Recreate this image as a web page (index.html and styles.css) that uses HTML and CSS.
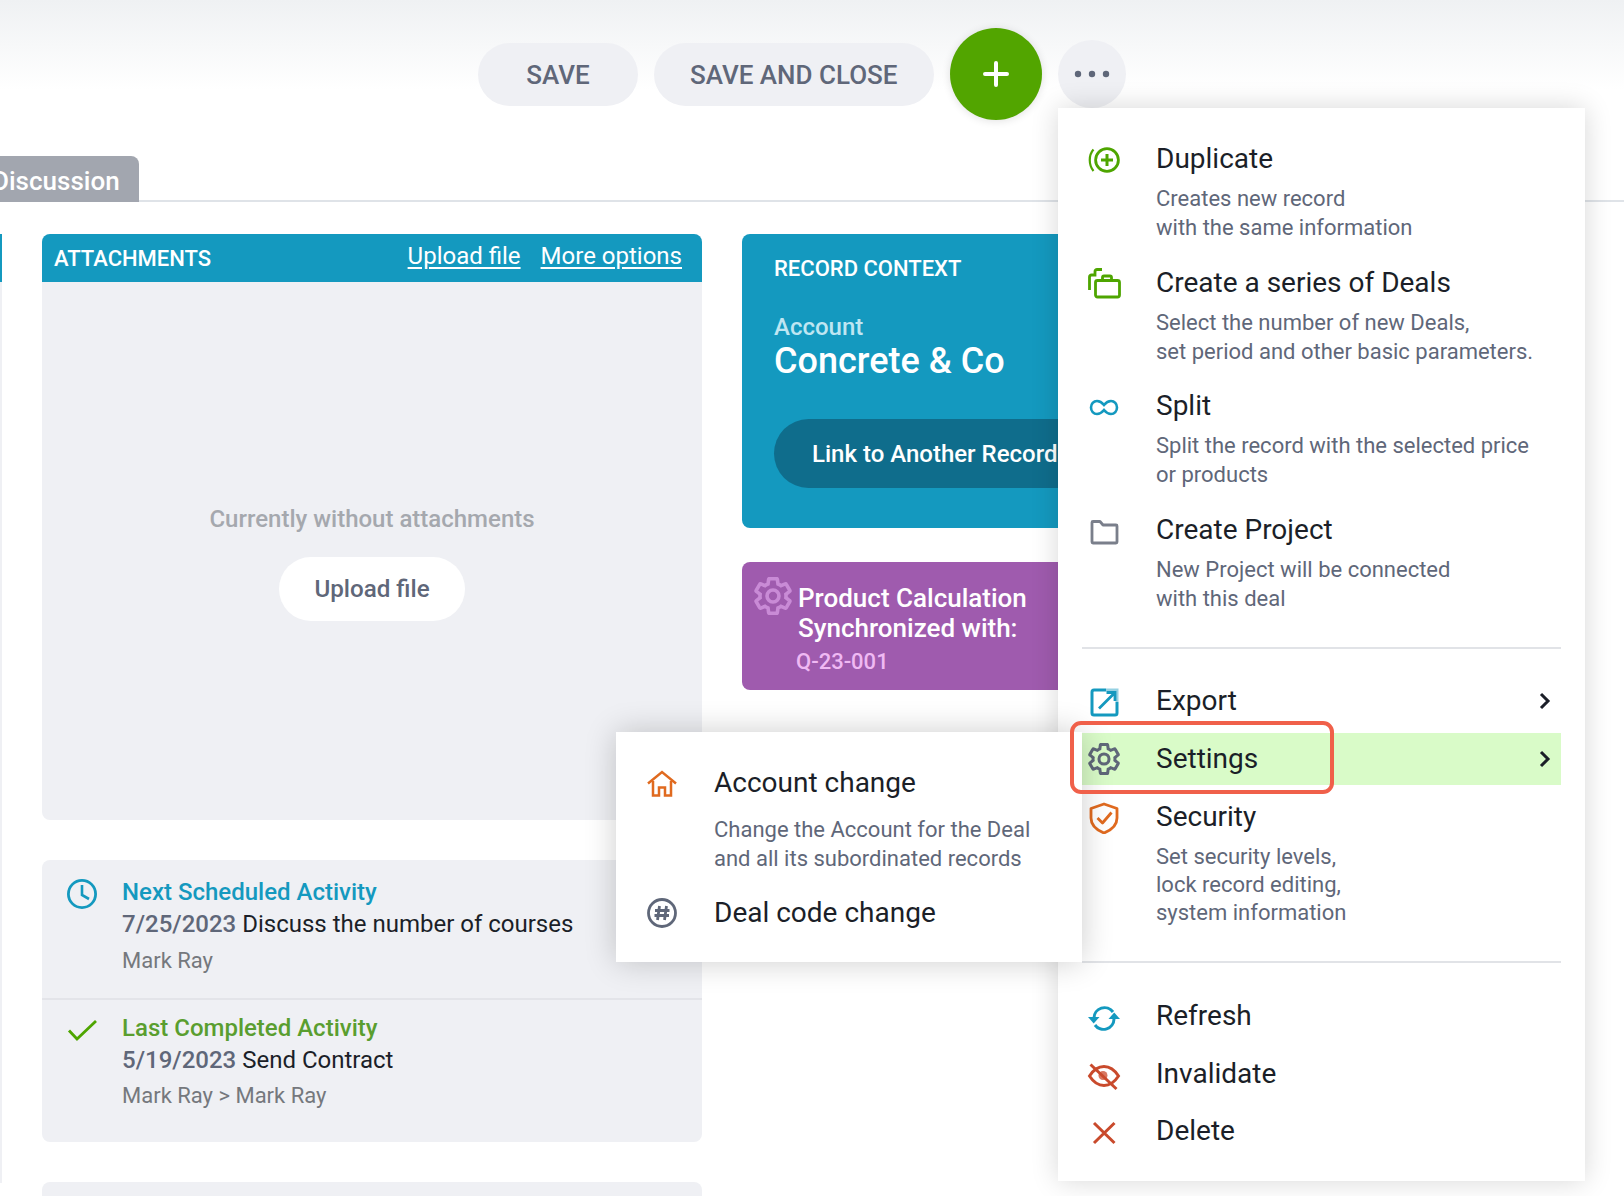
FILE: index.html
```html
<!DOCTYPE html>
<html lang="en">
<head>
<meta charset="utf-8">
<title>Deal</title>
<link rel="stylesheet" href="styles.css">
</head>
<body>
<svg class="defs" width="0" height="0" aria-hidden="true">
  <symbol id="gear" viewBox="1.5 1.5 21 21">
    <path d="M19.14 12.94c.04-.3.06-.61.06-.94 0-.32-.02-.64-.07-.94l2.03-1.58c.18-.14.23-.41.12-.61l-1.92-3.32c-.12-.22-.37-.29-.59-.22l-2.39.96c-.5-.38-1.03-.7-1.62-.94l-.36-2.54c-.04-.24-.24-.41-.48-.41h-3.84c-.24 0-.43.17-.47.41l-.36 2.54c-.59.24-1.13.57-1.62.94l-2.39-.96c-.22-.08-.47 0-.59.22L2.74 8.87c-.12.21-.08.47.12.61l2.03 1.58c-.05.3-.09.63-.09.94s.02.64.07.94l-2.03 1.58c-.18.14-.23.41-.12.61l1.92 3.32c.12.22.37.29.59.22l2.39-.96c.5.38 1.03.7 1.62.94l.36 2.54c.05.24.24.41.48.41h3.84c.24 0 .44-.17.47-.41l.36-2.54c.59-.24 1.13-.56 1.62-.94l2.39.96c.22.08.47 0 .59-.22l1.92-3.32c.12-.22.07-.47-.12-.61l-2.01-1.58z" fill="none" stroke="currentColor" stroke-width="2"/>
    <circle cx="12" cy="12" r="3.3" fill="none" stroke="currentColor" stroke-width="2"/>
  </symbol>
</svg>

<div class="page">
  <header class="topbar">
    <button class="pill pill-save">SAVE</button>
    <button class="pill">SAVE AND CLOSE</button>
    <button class="add" aria-label="Add">
      <svg width="28" height="28" viewBox="0 0 28 28"><path d="M14 3V25M3 14H25" stroke="#fff" stroke-width="4" stroke-linecap="round"/></svg>
    </button>
    <button class="more" aria-label="More">
      <svg width="36" height="8" viewBox="0 0 36 8"><circle cx="4" cy="4" r="3.2"/><circle cx="18" cy="4" r="3.2"/><circle cx="32" cy="4" r="3.2"/></svg>
    </button>
  </header>

  <nav class="tabs"><span class="tab">Discussion</span></nav>

  <main class="content">
    <div class="rail"><div class="rail-head"></div></div>

    <div class="col-main">
      <section class="attachments">
        <div class="att-head">
          <span class="att-title">ATTACHMENTS</span>
          <span class="att-links"><a class="att-link">Upload file</a><a class="att-link">More options</a></span>
        </div>
        <div class="att-body">
          <p class="att-empty">Currently without attachments</p>
          <button class="upload">Upload file</button>
        </div>
      </section>

      <section class="activity">
        <div class="act-row act-next">
          <div class="act-icon">
            <svg width="32" height="32" viewBox="0 0 32 32" fill="none" stroke="#1499bf" stroke-width="2.8"><circle cx="16" cy="16" r="13.6"/><path d="M16 7V17L23 21" stroke-width="2.6"/></svg>
          </div>
          <div>
            <div class="act-title blue">Next Scheduled Activity</div>
            <div class="act-line"><b class="act-date">7/25/2023</b> Discuss the number of courses</div>
            <div class="act-who">Mark Ray</div>
          </div>
        </div>
        <div class="act-row act-last">
          <div class="act-icon">
            <svg width="32" height="32" viewBox="0 0 32 32" fill="none" stroke="#4ea500" stroke-width="2.8"><path d="M3 17.500L11 26L30 8"/></svg>
          </div>
          <div>
            <div class="act-title green">Last Completed Activity</div>
            <div class="act-line"><b class="act-date">5/19/2023</b> Send Contract</div>
            <div class="act-who">Mark Ray &gt; Mark Ray</div>
          </div>
        </div>
      </section>

      <section class="stub"></section>
    </div>

    <div class="col-side">
      <section class="context">
        <h2 class="ctx-title">RECORD CONTEXT</h2>
        <div class="ctx-label">Account</div>
        <div class="ctx-name">Concrete &amp; Co</div>
        <button class="ctx-btn">Link to Another Record</button>
      </section>
      <section class="sync">
        <svg class="sync-icon" width="38" height="38"><use href="#gear"/></svg>
        <div>
          <div class="sync-title">Product Calculation<br>Synchronized with:</div>
          <div class="sync-code">Q-23-001</div>
        </div>
      </section>
    </div>
  </main>

  <aside class="menu">
    <div class="item tall">
      <div class="ico"><svg width="34" height="34" viewBox="0 0 34 34" fill="none" stroke="#4ea500" stroke-width="2.8"><circle cx="20" cy="18" r="11.4"/><path d="M20 12V24M14 18H26" stroke-width="3"/><path d="M6.5 7.5C1.5 13 1.5 23 6.5 29" stroke-width="2.2"/></svg></div>
      <div class="body"><div class="title">Duplicate</div><div class="desc">Creates new record<br>with the same information</div></div>
    </div>
    <div class="item tall tall-short">
      <div class="ico"><svg width="34" height="34" viewBox="0 0 34 34" fill="none" stroke="#4ea500" stroke-width="2.8"><rect x="8.5" y="14.5" width="24" height="16.5" rx="2"/><path d="M15.5 14V11.5A1.5 1.5 0 0 1 17 10H23A1.5 1.5 0 0 1 24.500 11.500V14"/><path d="M2.500 24V11A2 2 0 0 1 4.500 9H8V5.500A2 2 0 0 1 10 3.500H15"/></svg></div>
      <div class="body"><div class="title">Create a series of Deals</div><div class="desc">Select the number of new Deals,<br>set period and other basic parameters.</div></div>
    </div>
    <div class="item tall">
      <div class="ico"><svg width="34" height="34" viewBox="0 0 34 34" fill="none" stroke="#1499bf" stroke-width="2.6"><path d="M17 16C15 13.500 13 12 10 12C6.500 12 4 15 4 18.500C4 22 6.500 25 10 25C13 25 15 23.500 17 21C19 23.500 21 25 24 25C27.500 25 30 22 30 18.500C30 15 27.500 12 24 12C21 12 19 13.500 17 16Z"/></svg></div>
      <div class="body"><div class="title">Split</div><div class="desc">Split the record with the selected price<br>or products</div></div>
    </div>
    <div class="item">
      <div class="ico"><svg width="34" height="34" viewBox="0 0 34 34" fill="none" stroke="#7a7f8b" stroke-width="2.8" stroke-linejoin="round"><path d="M5 9.500A1 1 0 0 1 6 8.500H13L16 12H29A1 1 0 0 1 30 13V29A1 1 0 0 1 29 30H6A1 1 0 0 1 5 29Z"/></svg></div>
      <div class="body"><div class="title">Create Project</div><div class="desc">New Project will be connected<br>with this deal</div></div>
    </div>

    <hr class="sep sep-a">

    <div class="item row">
      <div class="ico"><svg width="34" height="34" viewBox="0 0 34 34" fill="none" stroke="#1499bf" stroke-width="3"><path d="M19 6H7A2 2 0 0 0 5 8V29A2 2 0 0 0 7 31H28A2 2 0 0 0 30 29V18"/><path d="M19 6H30V18" opacity=".45"/><path d="M12 24.500L27 9.500M19.500 8.500H28V17" stroke-width="2.800"/></svg></div>
      <div class="title">Export</div>
      <svg class="chev" width="12" height="18" viewBox="0 0 12 18" fill="none" stroke="#1b1f28" stroke-width="3"><path d="M2 2L9 9L2 16"/></svg>
    </div>
    <div class="item row active">
      <div class="ico"><svg class="gear" width="32" height="32"><use href="#gear"/></svg></div>
      <div class="title">Settings</div>
      <svg class="chev" width="12" height="18" viewBox="0 0 12 18" fill="none" stroke="#1b1f28" stroke-width="3"><path d="M2 2L9 9L2 16"/></svg>
    </div>
    <div class="item security">
      <div class="ico"><svg width="34" height="34" viewBox="0 0 34 34" fill="none" stroke="#e06a1f" stroke-width="2.800" stroke-linejoin="round"><path d="M17 4L30 8.500V18C30 25 24.500 30 17 33C9.500 30 4 25 4 18V8.500Z"/><path d="M10.500 18L15.500 23L24.500 12.500"/></svg></div>
      <div class="body"><div class="title">Security</div><div class="desc">Set security levels,<br>lock record editing,<br>system information</div></div>
    </div>

    <hr class="sep sep-b">

    <div class="item row">
      <div class="ico"><svg width="34" height="34" viewBox="0 0 34 34" fill="none" stroke="#1499bf" stroke-width="3"><path d="M7 19A10.500 10.500 0 0 1 26 13"/><path d="M27 20A10.500 10.500 0 0 1 8 26"/><path d="M1 18H12.500L6.700 24.500Z" fill="#1499bf" stroke="none"/><path d="M21.500 20H33L27.200 13.500Z" fill="#1499bf" stroke="none"/></svg></div>
      <div class="title">Refresh</div>
    </div>
    <div class="item row row-tight">
      <div class="ico"><svg width="34" height="34" viewBox="0 0 34 34" fill="none" stroke="#c94a2c" stroke-width="3"><path d="M2.500 19C7 12 12 9.500 17 9.500S27 12 31.500 19C27 26 22 28.500 17 28.500S7 26 2.500 19Z"/><circle cx="16" cy="18.500" r="4.500" fill="#c94a2c" opacity=".75" stroke="none"/><path d="M3.500 7.500L29.500 32"/></svg></div>
      <div class="title">Invalidate</div>
    </div>
    <div class="item row">
      <div class="ico"><svg width="34" height="34" viewBox="0 0 34 34" fill="none" stroke="#c94a2c" stroke-width="3"><path d="M7 9L27.500 29M27.500 9L7 29"/></svg></div>
      <div class="title">Delete</div>
    </div>
  </aside>

  <aside class="submenu">
    <div class="item sub-first">
      <div class="ico"><svg width="34" height="34" viewBox="0 0 34 34" fill="none" stroke="#e06a1f" stroke-width="2.500"><path d="M3 17.500L17 6L31 17.500"/><path d="M8 15V29.500H14V21.500H20V29.500H26V15"/></svg></div>
      <div class="body"><div class="title">Account change</div><div class="desc sub-desc">Change the Account for the Deal<br>and all its subordinated records</div></div>
    </div>
    <div class="item">
      <div class="ico"><svg width="34" height="34" viewBox="0 0 34 34" fill="none" stroke="#5f6779" stroke-width="2.800"><circle cx="17" cy="17" r="13.500"/><path d="M14.500 10L12.500 24M21.500 10L19.500 24M10 14.500H24.500M9.500 19.500H24" stroke-width="2.800"/></svg></div>
      <div class="title">Deal code change</div>
    </div>
  </aside>

  <div class="callout"></div>
</div>
</body>
</html>
```

FILE: styles.css
```css
* { box-sizing: border-box; }

html, body {
  margin: 0;
  padding: 0;
  background: #fff;
}

body {
  font-family: Roboto, "Liberation Sans", sans-serif;
  color: #1b1f28;
}

.defs { position: absolute; }

button {
  font-family: inherit;
  border: 0;
  padding: 0;
}

.page {
  position: relative;
  width: 1624px;
  height: 1196px;
  overflow: hidden;
  background: #fff;
}

/* top bar */
.topbar {
  display: flex;
  align-items: center;
  gap: 16px;
  height: 156px;
  padding: 28px 0 36px 478px;
  background: linear-gradient(#eff1f3 0, #fff 90px);
}

.pill {
  height: 63px;
  padding: 2px 36px 0;
  border-radius: 32px;
  background: #eff0f4;
  color: #5f6779;
  font-size: 26px;
  font-weight: 500;
}

.pill-save {
  width: 160px;
  padding: 2px 0 0;
}

.add {
  display: flex;
  align-items: center;
  justify-content: center;
  width: 92px;
  height: 92px;
  border-radius: 50%;
  background: #52a500;
  box-shadow: 0 1px 8px rgba(0, 0, 0, .12);
}

.more {
  display: flex;
  align-items: center;
  justify-content: center;
  width: 68px;
  height: 68px;
  border-radius: 50%;
  background: #eff0f4;
  fill: #5f6779;
}

/* tabs */
.tabs {
  height: 46px;
  border-bottom: 2px solid #dfe3e8;
}

.tab {
  display: inline-block;
  height: 46px;
  margin-left: -8px;
  padding: 0 19px 0 0;
  border-radius: 0 8px 0 0;
  background: #a2a6af;
  color: #fff;
  font-size: 26px;
  font-weight: 500;
  line-height: 50px;
}

/* content */
.content {
  display: grid;
  grid-template-columns: 2px 660px 420px;
  column-gap: 40px;
  padding-top: 32px;
}

.rail {
  height: 949px;
  background: #eff0f4;
}

.rail-head {
  height: 48px;
  background: #1499bf;
}

.col-main {
  display: flex;
  flex-direction: column;
  gap: 40px;
}

.attachments {
  height: 586px;
  border-radius: 8px;
  background: #eff0f4;
  overflow: hidden;
}

.att-head {
  display: flex;
  align-items: center;
  justify-content: space-between;
  height: 48px;
  padding: 0 20px 0 12px;
  background: #1499bf;
  color: #fff;
}

.att-title {
  font-size: 22px;
  font-weight: 500;
}

.att-links {
  display: flex;
  gap: 20px;
  margin-top: -5px;
}

.att-link {
  font-size: 24px;
  text-decoration: underline;
  text-underline-offset: 3px;
}

.att-body {
  display: flex;
  flex-direction: column;
  align-items: center;
  padding-top: 221px;
}

.att-empty {
  margin: 0 0 22px;
  color: #a5a8ae;
  font-size: 24px;
  font-weight: 500;
  line-height: 32px;
}

.upload {
  width: 186px;
  height: 64px;
  border-radius: 32px;
  background: #fff;
  color: #5f6779;
  font-size: 24.200px;
  font-weight: 500;
}

.activity {
  height: 282px;
  border-radius: 8px;
  background: #eff0f4;
  font-size: 24px;
}

.act-row {
  display: flex;
  align-items: flex-start;
}

.act-next {
  height: 140px;
  padding-top: 17px;
  border-bottom: 2px solid #e3e4e9;
}

.act-last { padding-top: 13px; }

.act-icon {
  display: flex;
  justify-content: center;
  width: 80px;
}

.act-next .act-icon { margin-top: 1px; }

.act-title {
  font-weight: 500;
  line-height: 30px;
}

.blue { color: #1499bf; }
.green { color: #5a9e2f; }

.act-line {
  margin-top: 2px;
  line-height: 31px;
}

.act-date {
  color: #5f6779;
  font-weight: 500;
}

.act-who {
  margin-top: 5px;
  color: #75787d;
  font-size: 22px;
  line-height: 31px;
}

.act-last .act-who { margin-top: 4px; }

.stub {
  height: 40px;
  border-radius: 8px;
  background: #eff0f4;
}

.col-side {
  display: flex;
  flex-direction: column;
  gap: 34px;
}

.context {
  height: 294px;
  padding: 20px 32px 0;
  border-radius: 8px;
  background: #1499bf;
  color: #fff;
}

.ctx-title {
  margin: 0;
  font-size: 22px;
  font-weight: 500;
  line-height: 30px;
}

.ctx-label {
  margin-top: 29px;
  color: #bfe6f2;
  font-size: 24px;
  font-weight: 500;
  line-height: 29px;
}

.ctx-name {
  font-size: 36px;
  font-weight: 500;
  line-height: 38px;
}

.ctx-btn {
  display: block;
  width: 340px;
  height: 69px;
  margin-top: 39px;
  padding-left: 38px;
  border-radius: 35px;
  background: #0f6d8c;
  color: #fff;
  font-size: 24px;
  font-weight: 500;
  text-align: left;
}

.sync {
  display: flex;
  height: 128px;
  padding: 13px 0 0 12px;
  border-radius: 8px;
  background: #9f5bae;
  color: #fff;
}

.sync-icon {
  flex: none;
  margin: 2px 6px 0 0;
  color: #c98bd6;
}

.sync-title {
  margin-top: 8px;
  font-size: 26px;
  font-weight: 500;
  line-height: 30px;
}

.sync-code {
  margin: 4px 0 0 -2px;
  color: #efb9f3;
  font-size: 22px;
  font-weight: 500;
  line-height: 30px;
}

/* menus */
.menu {
  position: absolute;
  top: 108px;
  left: 1058px;
  width: 527px;
  padding: 25px 24px 24px;
  background: #fff;
  box-shadow: 0 0 26px rgba(0, 0, 0, .16);
}

.submenu {
  position: absolute;
  top: 732px;
  left: 616px;
  width: 466px;
  padding: 25px 24px 23px;
  background: #fff;
  box-shadow: 0 0 30px rgba(0, 0, 0, .2);
}

.item {
  display: flex;
  align-items: flex-start;
  gap: 30px;
}

.tall { margin-bottom: 15px; }
.tall-short { margin-bottom: 14px; }

.row {
  align-items: center;
  height: 52px;
  margin-bottom: 6px;
}

.row:last-child { margin-bottom: 0; }
.row-tight { margin-bottom: 5px; }

.active { background: #d9fbc8; }

.ico {
  display: flex;
  align-items: center;
  justify-content: center;
  flex: none;
  width: 44px;
  height: 52px;
}

.gear { color: #5f6779; }

.title {
  font-size: 28px;
  line-height: 52px;
}

.desc {
  color: #5f6779;
  font-size: 22px;
  line-height: 28.500px;
}

.security .desc { line-height: 28px; }

.sub-desc { margin-top: 7px; }
.sub-first { margin-bottom: 14px; }

.chev { margin-left: auto; margin-right: 10px; }

.sep {
  height: 2px;
  margin: 0;
  border: 0;
  background: #e1e3e7;
}

.sep-a { margin: 34px 0 26px; }
.sep-b { margin: 34px 0 27px; }

.callout {
  position: absolute;
  top: 721px;
  left: 1070px;
  width: 264px;
  height: 73px;
  border: 4px solid #f0604a;
  border-radius: 11px;
}
```
